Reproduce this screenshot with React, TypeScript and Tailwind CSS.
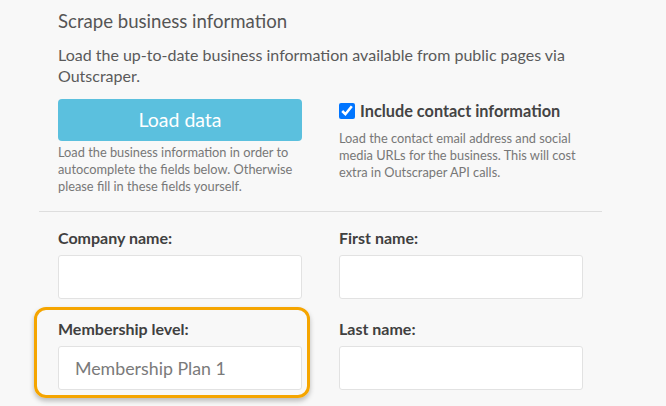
const FONT = "font-['Lato','Noto_Sans',sans-serif]";

function Field({ label, value }: { label: string; value?: string }) {
  return (
    <div>
      <label className="block h-[20px] text-[16px] leading-[20px] font-bold text-[#404040]">{label}</label>
      <div className="mt-[7px] h-[44px] rounded-[3px] border border-[#e2e2e2] bg-white px-[16px] flex items-center text-[17.8px] text-[#7a7a7a]">
        {value}
      </div>
    </div>
  );
}

export default function App() {
  return (
    <div className={`relative min-h-screen bg-[#f8f8f8] ${FONT}`}>
      <div className="ml-[39px] w-[563px]">
        {/* Scrape section */}
        <div className="px-[19px] pt-[9px]">
          <h2 className="text-[18.6px] leading-[24px] text-[#555]">Scrape business information</h2>
          <p className="mt-[11px] text-[16px] leading-[21px] text-[#5a5a5a]">
            Load the up-to-date business information available from public pages via Outscraper.
          </p>
          <div className="mt-[13px] grid grid-cols-2 gap-x-[37px]">
            <div>
              <button className="h-[42px] w-full rounded-[4px] bg-[#5bc0de] text-[19.5px] text-white">Load data</button>
              <p className="mt-[3px] text-[12.8px] leading-[17px] text-[#777]">
                Load the business information in order to autocomplete the fields below. Otherwise please fill in these fields yourself.
              </p>
            </div>
            <div>
              <label className="mt-[2px] flex items-center gap-[5px] text-[16.3px] leading-[20px] font-bold text-[#444]">
                <input type="checkbox" defaultChecked className="m-0 h-[16px] w-[16px] accent-[#0075ff]" />
                Include contact information
              </label>
              <p className="mt-[9px] text-[12.8px] leading-[17px] text-[#777]">
                Load the contact email address and social media URLs for the business. This will cost extra in Outscraper API calls.
              </p>
            </div>
          </div>
        </div>

        <hr className="mt-[16px] border-0 border-t border-[#dedede]" />

        {/* Contact fields */}
        <div className="px-[19px] pt-[16px] grid grid-cols-2 gap-x-[37px] gap-y-[20px]">
          <Field label="Company name:" />
          <Field label="First name:" />
          <div className="relative">
            <Field label="Membership level:" value="Membership Plan 1" />
            <div className="pointer-events-none absolute -left-[24px] -right-[8px] -top-[12px] -bottom-[8px] rounded-[12px] border-[3px] border-[#f5a500] shadow-[0_3px_5px_rgba(0,0,0,0.25)]" />
          </div>
          <Field label="Last name:" />
        </div>
      </div>
    </div>
  );
}
